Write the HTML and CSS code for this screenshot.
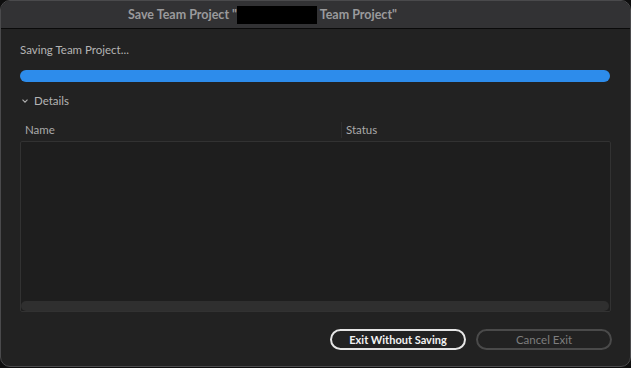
FILE: index.html
```html
<!doctype html>
<html lang="en">
  <head>
    <meta charset="UTF-8" />
    <title>Save Team Project</title>
    <link rel="stylesheet" href="styles.css">
  </head>
  <body>
    <div class="window">
      <div class="titlebar">
        <span>Save Team Project "</span><span class="redact"></span><span>&nbsp;Team Project"</span>
      </div>

      <div class="content">
        <p class="status">Saving Team Project...</p>
        <div class="progress"><div class="progress-fill"></div></div>

        <div class="details-toggle">
          <svg class="chevron" width="6" height="4" viewBox="0 0 6 4">
            <path d="M0.5 0.7 L3 3.2 L5.5 0.7" fill="none" stroke="#b0b0b0" stroke-width="1.1" />
          </svg>
          <span>Details</span>
        </div>

        <div class="table-head">
          <span class="col-name">Name</span>
          <span class="col-status">Status</span>
        </div>
        <div class="table-body">
          <div class="scrollbar"></div>
        </div>

        <div class="actions">
          <button class="btn btn-primary">Exit Without Saving</button>
          <button class="btn btn-disabled">Cancel Exit</button>
        </div>
      </div>
    </div>
  </body>
</html>
```

FILE: styles.css
```css
html,
body {
  margin: 0;
  background-color: #0e0e0e;
}
body {
  font-family: Lato, "Open Sans", sans-serif;
  font-size: 11.5px;
  color: #b4b4b4;
}
.window {
  box-sizing: border-box;
  width: 631px;
  height: 367px;
  background-color: #222222;
  border: 1px solid #4a4a4c;
  border-radius: 10px;
  overflow: hidden;
  display: flex;
  flex-direction: column;
}
.titlebar {
  height: 27px;
  background-color: #323234;
  border-bottom: 1px solid #0a0a0a;
  display: flex;
  align-items: center;
  padding-left: 127px;
  font-family: Lato, "Liberation Sans", sans-serif;
  font-weight: bold;
  font-size: 12.5px;
  color: #9a9a9c;
  white-space: pre;
}
.redact {
  display: inline-block;
  width: 80px;
  height: 18px;
  background-color: #000;
}
.content {
  flex: 1;
  display: flex;
  flex-direction: column;
  padding: 0 20px 0 19px;
}
.status {
  margin: 13px 0 0;
  line-height: 16px;
}
.progress {
  margin-top: 12px;
  height: 12px;
  border-radius: 6px;
  background-color: #2d2d2d;
  overflow: hidden;
}
.progress-fill {
  width: 100%;
  height: 100%;
  background-color: #2d8ceb;
}
.details-toggle {
  margin-top: 11px;
  display: flex;
  align-items: center;
  gap: 6px;
  line-height: 16px;
  padding-left: 2px;
}
.chevron {
  display: block;
}
.table-head {
  margin-top: 13px;
  display: flex;
  line-height: 16px;
  color: #aaaaaa;
}
.col-name {
  width: 316px;
  padding-left: 5px;
  border-right: 1px solid #2e2e2e;
}
.col-status {
  padding-left: 4px;
}
.table-body {
  box-sizing: border-box;
  margin-top: 3px;
  margin-right: -1px;
  height: 171px;
  background-color: #1e1e1e;
  border: 1px solid #323232;
  border-radius: 2px;
  display: flex;
  flex-direction: column;
  justify-content: flex-end;
  padding: 0 1px 0 0;
}
.scrollbar {
  height: 10px;
  background-color: #2f2f2f;
  border-radius: 5px;
}
.actions {
  margin-top: 17px;
  display: flex;
  justify-content: flex-end;
  gap: 10px;
  margin-right: -2px;
}
.btn {
  box-sizing: border-box;
  width: 136px;
  height: 21px;
  border-radius: 11px;
  background-color: transparent;
  font-family: Lato, "Open Sans", sans-serif;
  font-size: 11.5px;
  padding: 0;
}
.btn-primary {
  border: 2px solid #e6e6e6;
  color: #f2f2f2;
  font-weight: bold;
  font-size: 11px;
}
.btn-disabled {
  border: 2px solid #4a4a4a;
  color: #7e7e7e;
}
```
